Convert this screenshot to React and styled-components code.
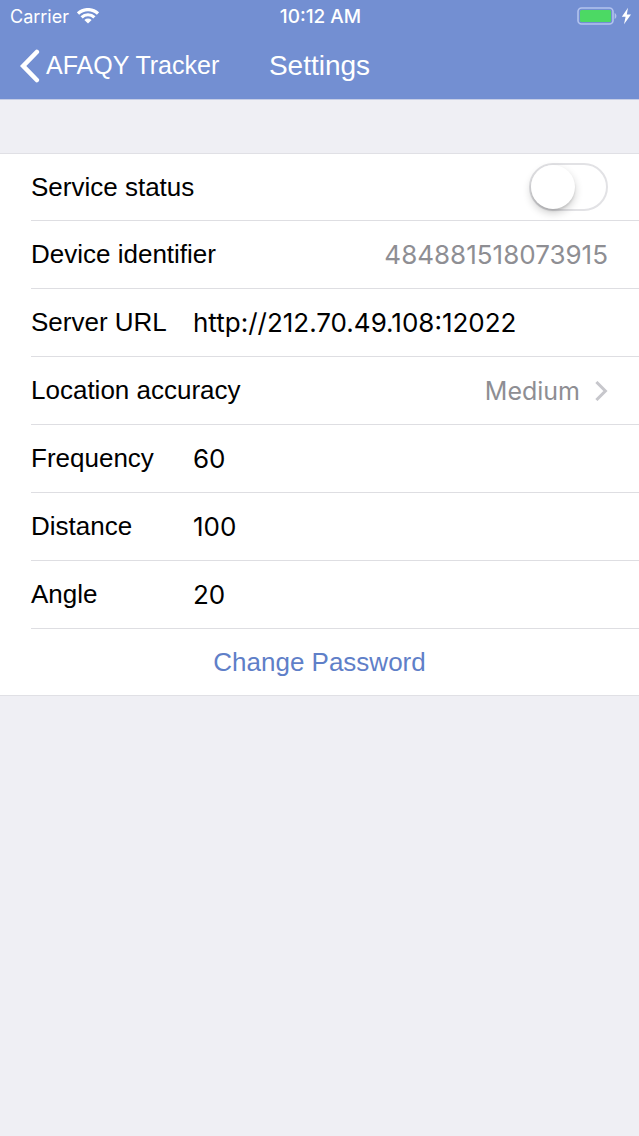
import React, { useState } from 'react';
import styled, { createGlobalStyle } from 'styled-components';

const App = () =>{

    const [active, setActive] = useState(false)
    const [form, setForm] = useState({
        url: 'http://212.70.49.108:12022',
        frequency: '60',
        distance: '100',
        angle: '20'
    })

    const handleChange = (e) =>{
        const {name, value} = e.target;
        setForm({...form, [name]: value})
    }

    return(
        <>
            <GlobalStyle />
            <Header>
                <StatusBar>
                    <Carrier>
                        Carrier
                        <WifiIcon />
                    </Carrier>
                    <Time>10:12 AM</Time>
                    <Battery>
                        <BatteryIcon />
                    </Battery>
                </StatusBar>
                <NavBar>
                    <Back type="button">
                        <BackIcon />
                        AFAQY Tracker
                    </Back>
                    <Title>Settings</Title>
                </NavBar>
            </Header>
            <List>
                <Row>
                    <Label htmlFor="status">Service status</Label>
                    <Switch
                        id="status"
                        type="checkbox"
                        role="switch"
                        checked={active}
                        onChange={e=>setActive(e.target.checked)}
                    />
                </Row>
                <Row>
                    <Label htmlFor="device">Device identifier</Label>
                    <Detail id="device">484881518073915</Detail>
                </Row>
                <Row>
                    <FieldLabel htmlFor="url">Server URL</FieldLabel>
                    <Field id="url" name="url" type="text" value={form.url} onChange={e=>handleChange(e)}/>
                </Row>
                <Row>
                    <RowButton type="button">
                        <span>Location accuracy</span>
                        <Choice>
                            Medium
                            <ChevronIcon />
                        </Choice>
                    </RowButton>
                </Row>
                <Row>
                    <FieldLabel htmlFor="frequency">Frequency</FieldLabel>
                    <Field id="frequency" name="frequency" type="text" value={form.frequency} onChange={e=>handleChange(e)}/>
                </Row>
                <Row>
                    <FieldLabel htmlFor="distance">Distance</FieldLabel>
                    <Field id="distance" name="distance" type="text" value={form.distance} onChange={e=>handleChange(e)}/>
                </Row>
                <Row>
                    <FieldLabel htmlFor="angle">Angle</FieldLabel>
                    <Field id="angle" name="angle" type="text" value={form.angle} onChange={e=>handleChange(e)}/>
                </Row>
                <Row>
                    <Password type="button">Change Password</Password>
                </Row>
            </List>
        </>
    );
}

const WifiIcon = () =>(
    <svg width="22" height="16" viewBox="0 0 22 16" fill="none" stroke="#fff" strokeWidth="3.2">
        <path d="M1 5.6 C6.6 .2 15.4 .2 21 5.6" />
        <path d="M4.6 9.3 C8.2 5.9 13.8 5.9 17.4 9.3" />
        <path d="M11 15.4 L7.4 11.9 C9.5 10.1 12.5 10.1 14.6 11.9 Z" fill="#fff" stroke="none" />
    </svg>
)

const BatteryIcon = () =>(
    <svg width="55" height="18" viewBox="0 0 55 18">
        <rect x="2" y="1" width="35" height="16" rx="3.5" fill="none" stroke="#b3c3ee" strokeWidth="1.6" />
        <rect x="4" y="3" width="31" height="12" rx="1.5" fill="#4cd964" />
        <path d="M38.6 6 C41 7 41 11 38.6 12 Z" fill="#b3c3ee" />
        <path d="M52 .8 L45.8 9.8 H49.6 L48 17.2 L55 7.6 H50.8 Z" fill="#fff" />
    </svg>
)

const BackIcon = () =>(
    <svg width="20" height="34" viewBox="0 0 20 34" fill="none" stroke="#fff" strokeWidth="4.6" strokeLinecap="round" strokeLinejoin="miter">
        <path d="M16.8 3 L3.2 17 L16.8 31" />
    </svg>
)

const ChevronIcon = () =>(
    <svg width="13" height="20" viewBox="0 0 13 20" fill="none" stroke="#c7c7cc" strokeWidth="3">
        <path d="M1.4 1 L10.4 10 L1.4 19" />
    </svg>
)

const GlobalStyle = createGlobalStyle`
    *{
        box-sizing: border-box;
    }
    body{
        margin: 0;
        background-color: #efeff4;
        color: #000;
        font-family: 'Liberation Sans', Arial, sans-serif;
        font-size: 26px;
    }
    button, input{
        font: inherit;
        color: inherit;
        border: none;
        padding: 0;
        background: none;
    }
    button{
        cursor: pointer;
    }
    svg{
        display: block;
        flex: none;
    }
`;
const Header = styled.header`
    background-color: #738fd2;
    color: #fff;
    border-bottom: 1px solid #c5cde6;
`;
const StatusBar = styled.div`
    display: grid;
    grid-template-columns: 1fr auto 1fr;
    align-items: center;
    height: 32px;
    padding: 0 8px 0 10px;
    font-family: Inter, sans-serif;
    font-size: 18px;
`;
const Carrier = styled.div`
    display: flex;
    align-items: center;
    gap: 8px;
`;
const Time = styled.div`
    font-size: 19px;
    font-weight: 500;
`;
const Battery = styled.div`
    display: flex;
    justify-content: end;
`;
const NavBar = styled.nav`
    display: grid;
    grid-template-columns: 1fr auto 1fr;
    align-items: center;
    height: 67px;
    padding: 0 20px;
`;
const Back = styled.button`
    display: flex;
    align-items: center;
    justify-self: start;
    gap: 6px;
    font-size: 25px;
    white-space: nowrap;
`;
const Title = styled.h1`
    margin: 0;
    font-size: 28px;
    font-weight: 400;
`;
const List = styled.main`
    margin-top: 53px;
    padding-left: 31px;
    background-color: #fff;
    border-top: 1px solid #e0e0e5;
    border-bottom: 1px solid #e0e0e5;
`;
const Row = styled.div`
    display: flex;
    align-items: center;
    justify-content: space-between;
    height: 68px;
    padding-right: 31px;
    border-bottom: 1px solid #dedee2;

    &:first-child{
        height: 67px;
    }
    &:last-child{
        height: 66px;
        border-bottom: none;
    }
`;
const Label = styled.label`
    white-space: nowrap;
`;
const FieldLabel = styled(Label)`
    width: 162px;
`;
const Field = styled.input`
    flex: 1;
    min-width: 0;
    height: 44px;
    font-family: Inter, sans-serif;
    font-size: 26px;
    outline: none;
`;
const Detail = styled.output`
    font-family: Inter, sans-serif;
    font-size: 26px;
    color: #8e8e93;
`;
const RowButton = styled.button`
    display: flex;
    flex: 1;
    align-items: center;
    justify-content: space-between;
    height: 100%;
`;
const Choice = styled.span`
    display: flex;
    align-items: center;
    gap: 15px;
    font-family: Inter, sans-serif;
    font-size: 25px;
    color: #8e8e93;
`;
const Switch = styled.input`
    appearance: none;
    display: flex;
    align-items: center;
    width: 79px;
    height: 48px;
    margin: 0;
    border: 2px solid #e2e2e5;
    border-radius: 24px;
    background-color: #fff;
    cursor: pointer;

    &::before{
        content: '';
        width: 44px;
        height: 44px;
        border-radius: 50%;
        background-color: #fff;
        box-shadow: 0 4px 8px rgba(0, 0, 0, 0.2), 0 2px 2px rgba(0, 0, 0, 0.1);
    }
    &:checked{
        justify-content: end;
        border-color: #4cd964;
        background-color: #4cd964;
    }
`;
const Password = styled.button`
    flex: 1;
    height: 100%;
    color: #5f7fc8;
`;

export default App;
